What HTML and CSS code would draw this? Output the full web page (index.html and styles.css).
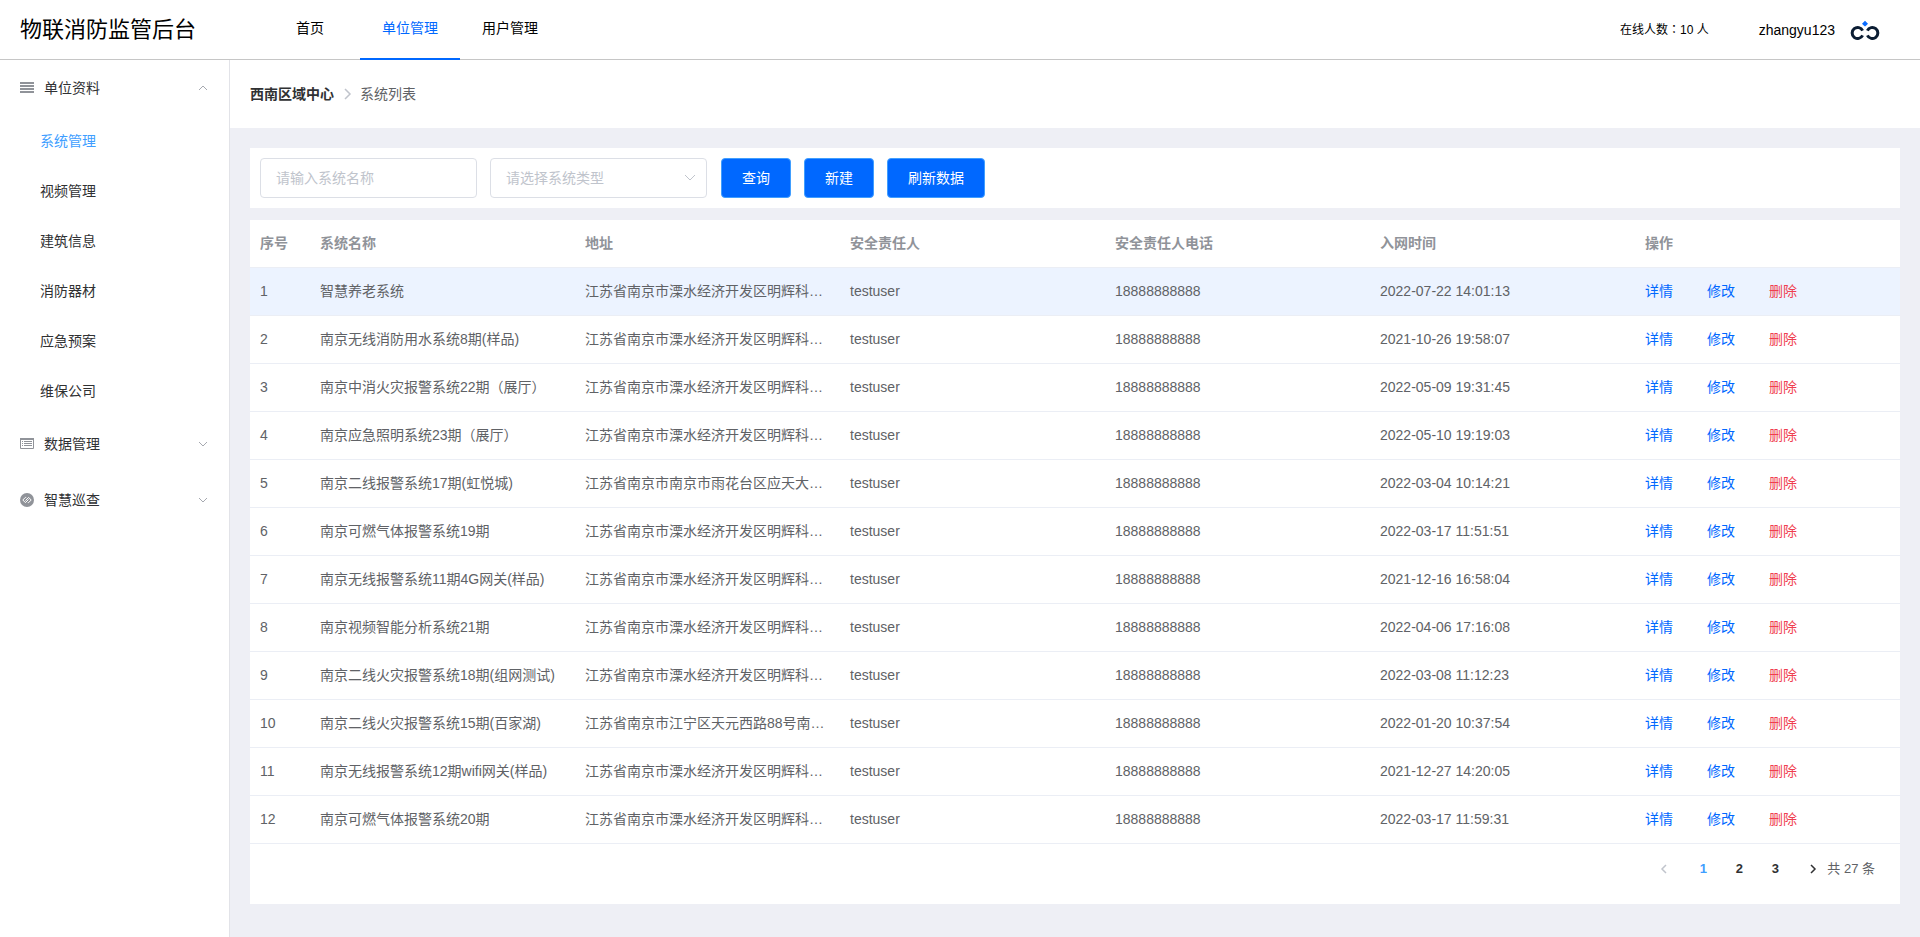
FILE: index.html
```html
<!DOCTYPE html>
<html lang="zh-CN">
<head>
<meta charset="utf-8">
<title>物联消防监管后台</title>
<link rel="stylesheet" href="styles.css">
</head>
<body>
<header class="header">
  <h1 class="brand">物联消防监管后台</h1>
  <nav class="topnav">
    <a class="topnav-item" href="#">首页</a>
    <a class="topnav-item is-active" href="#">单位管理</a>
    <a class="topnav-item" href="#">用户管理</a>
  </nav>
  <div class="user">
    <span class="online">在线人数<span class="punct" lang="zh-TW">：</span>10 人</span>
    <span class="username">zhangyu123</span>
    <svg class="logo" viewBox="0 0 30 20" width="30" height="20" aria-hidden="true">
      <path d="M12.600 10.600A5.500 5.500 0 1 0 12.600 15.400M17.400 10.600A5.500 5.500 0 1 1 17.400 15.400" fill="none" stroke="#0b1d33" stroke-width="3"/>
      <path d="M15 .8L16.500 2.300L18 3.700L16.500 5.200L15 6.600L13.500 5.200L12 3.700L13.500 2.300Z" fill="#0a6cff"/>
    </svg>
  </div>
</header>
<div class="body">
  <aside class="sidebar">
    <button class="group" type="button">
      <svg class="group-icon" viewBox="0 0 14 14" width="14" height="14"><path d="M0 1h14v2H0zM0 4h14v2H0zM0 7h14v2H0zM0 10h14v2H0z" fill="#909399"/></svg>
      <span class="group-name">单位资料</span>
      <svg class="chevron" viewBox="0 0 12 12" width="12" height="12"><path d="M2 8L6 4L10 8"/></svg>
    </button>
    <nav class="subnav">
      <a class="subnav-item is-active" href="#">系统管理</a>
      <a class="subnav-item" href="#">视频管理</a>
      <a class="subnav-item" href="#">建筑信息</a>
      <a class="subnav-item" href="#">消防器材</a>
      <a class="subnav-item" href="#">应急预案</a>
      <a class="subnav-item" href="#">维保公司</a>
    </nav>
    <button class="group" type="button">
      <svg class="group-icon" viewBox="0 0 14 14" width="14" height="14"><path d="M.5 1.500h13v10H.5z" fill="none" stroke="#909399"/><path d="M0 1h14v2H0zM2 4h1v1H2zM4 4h8v1H4zM2 6h1v1H2zM4 6h8v1H4zM2 8h1v1H2zM4 8h8v1H4z" fill="#909399"/></svg>
      <span class="group-name">数据管理</span>
      <svg class="chevron" viewBox="0 0 12 12" width="12" height="12"><path d="M2 4L6 8L10 4"/></svg>
    </button>
    <button class="group" type="button">
      <svg class="group-icon" viewBox="0 0 14 14" width="14" height="14"><circle cx="7" cy="7" r="7" fill="#909399"/><path d="M6.200 4.400L5.400 4.400L2.800 7L5.400 9.600L8.600 6.400M7.800 9.600L8.600 9.600L11.200 7L8.600 4.400L5.400 7.600" fill="none" stroke="#fff"/></svg>
      <span class="group-name">智慧巡查</span>
      <svg class="chevron" viewBox="0 0 12 12" width="12" height="12"><path d="M2 4L6 8L10 4"/></svg>
    </button>
  </aside>
  <main class="main">
    <nav class="breadcrumb">
      <a class="crumb-root" href="#">西南区域中心</a>
      <svg class="crumb-sep" viewBox="0 0 8 12" width="8" height="12"><path d="M1 1L6 6L1 11"/></svg>
      <span>系统列表</span>
    </nav>
    <div class="content">
      <form class="toolbar">
        <input class="field" type="text" placeholder="请输入系统名称" aria-label="系统名称">
        <div class="select">
          <select class="field" aria-label="系统类型"><option>请选择系统类型</option></select>
          <svg class="chevron" viewBox="0 0 12 12" width="12" height="12"><path d="M1 3L6 8L11 3"/></svg>
        </div>
        <div class="buttons">
          <button class="btn" type="button">查询</button>
          <button class="btn" type="button">新建</button>
          <button class="btn" type="button">刷新数据</button>
        </div>
      </form>
      <section class="card">
        <table class="table">
          <thead>
            <tr><th class="col-index">序号</th><th>系统名称</th><th>地址</th><th>安全责任人</th><th>安全责任人电话</th><th>入网时间</th><th>操作</th></tr>
          </thead>
          <tbody id="rows"></tbody>
        </table>
        <nav class="pagination" aria-label="分页">
          <button class="page-arrow" type="button" disabled aria-label="上一页"><svg viewBox="0 0 8 12" width="8" height="12"><path d="M6 2L2 6L6 10"/></svg></button>
          <button class="page is-active" type="button">1</button>
          <button class="page" type="button">2</button>
          <button class="page" type="button">3</button>
          <button class="page-arrow is-next" type="button" aria-label="下一页"><svg viewBox="0 0 8 12" width="8" height="12"><path d="M2 2L6 6L2 10"/></svg></button>
          <span class="total">共 27 条</span>
        </nav>
      </section>
    </div>
  </main>
</div>
<script src="app.js"></script>
</body>
</html>
```
FILE: styles.css
```css
* { box-sizing: border-box; }
body {
  margin: 0;
  min-height: 100vh;
  display: flex;
  flex-direction: column;
  background: #eeeff5;
  color: #606266;
  font: 14px/20px "Liberation Sans", "Noto Sans CJK SC", sans-serif;
}
a { color: inherit; text-decoration: none; }
button, input, select { font: inherit; }
button { border: 0; background: none; cursor: pointer; }
/* Full-width punctuation centred in its box */
.punct { font-family: "Noto Sans CJK TC", sans-serif; line-height: 1; }

.header {
  display: flex;
  height: 60px;
  background: #fff;
  border-bottom: 1px solid #c6c6c6;
  color: #000;
}
.brand {
  width: 240px;
  margin: 0 0 0 20px;
  font-size: 22px;
  font-weight: 400;
  line-height: 60px;
}
.topnav { display: flex; height: 60px; }
.topnav-item { width: 100px; line-height: 56px; text-align: center; }
.topnav-item.is-active { color: #0068ff; border-bottom: 2px solid #0068ff; }
.user {
  display: flex;
  align-items: center;
  margin-left: auto;
  padding-right: 40px;
}
.online { margin-right: 50px; font-size: 12px; }
.username { margin-right: 15px; }

.body { flex: 1; display: flex; }
.sidebar {
  flex: none;
  width: 230px;
  background: #fff;
  border-right: 1px solid #e2e3e8;
  color: #303133;
}
.group {
  display: flex;
  align-items: center;
  width: 100%;
  height: 56px;
  padding: 0 20px;
  color: inherit;
}
.group-name { margin-left: 10px; }
.group .chevron { margin-left: auto; }
.chevron path { fill: none; stroke: #a6a9b0; }
.subnav-item { display: block; padding-left: 40px; line-height: 50px; }
.subnav-item.is-active { color: #409eff; }

.main { flex: 1; min-width: 0; }
.breadcrumb {
  display: flex;
  align-items: center;
  height: 68px;
  padding: 0 20px;
  background: #fff;
}
.crumb-root { color: #303133; font-weight: 700; }
.crumb-sep { margin: 0 8px 0 10px; }
.crumb-sep path { fill: none; stroke: #c0c4cc; stroke-width: 1.5; }
.content { padding: 20px; }
.toolbar {
  display: flex;
  gap: 13px;
  padding: 10px;
  margin-bottom: 12px;
  background: #fff;
}
.field {
  width: 217px;
  height: 40px;
  padding: 0 15px;
  border: 1px solid #dcdfe6;
  border-radius: 4px;
  background: #fff;
  color: #c0c4cc;
  appearance: none;
}
.field::placeholder { color: #c0c4cc; }
.select { display: grid; align-items: center; }
.select > * { grid-area: 1 / 1; }
.select .chevron { justify-self: end; margin-right: 11px; pointer-events: none; }
.select .chevron path { stroke: #c0c4cc; }
.buttons { display: flex; gap: 13px; margin-left: 1px; }
.btn {
  height: 40px;
  padding: 0 20px;
  border: 1px solid #409eff;
  border-radius: 4px;
  background: #0068ff;
  color: #fff;
}

.card { background: #fff; }
.table { width: 100%; table-layout: fixed; border-collapse: separate; border-spacing: 0; }
.table th, .table td {
  height: 48px;
  padding: 0 10px 2px;
  border-bottom: 1px solid #ebeef5;
  text-align: left;
  white-space: nowrap;
  overflow: hidden;
  text-overflow: ellipsis;
}
.table th { color: #909399; font-weight: 700; }
.table .col-index { width: 60px; }
.table .is-current td { background: #ecf3ff; }
.actions { display: flex; gap: 34px; color: #0068ff; }
.actions .danger { color: #f03e50; }

.pagination {
  display: flex;
  align-items: center;
  justify-content: flex-end;
  height: 60px;
  padding: 0 25px 10px 0;
  font-size: 13px;
}
.page { width: 36px; padding: 0; color: #303133; font-weight: 700; }
.page.is-active { color: #409eff; }
.page-arrow { display: flex; padding: 0 17px 0 0; }
.page-arrow.is-next { padding: 0 10px 0 16px; }
.page-arrow path { fill: none; stroke: #303133; stroke-width: 1.5; }
.page-arrow:disabled path { stroke: #c0c4cc; }
```
FILE: app.js
```js
const address = "江苏省南京市溧水经济开发区明辉科技园";
const systems = [
  ["智慧养老系统", address, "2022-07-22 14:01:13"],
  ["南京无线消防用水系统8期(样品)", address, "2021-10-26 19:58:07"],
  ["南京中消火灾报警系统22期（展厅）", address, "2022-05-09 19:31:45"],
  ["南京应急照明系统23期（展厅）", address, "2022-05-10 19:19:03"],
  ["南京二线报警系统17期(虹悦城)", "江苏省南京市南京市雨花台区应天大街口", "2022-03-04 10:14:21"],
  ["南京可燃气体报警系统19期", address, "2022-03-17 11:51:51"],
  ["南京无线报警系统11期4G网关(样品)", address, "2021-12-16 16:58:04"],
  ["南京视频智能分析系统21期", address, "2022-04-06 17:16:08"],
  ["南京二线火灾报警系统18期(组网测试)", address, "2022-03-08 11:12:23"],
  ["南京二线火灾报警系统15期(百家湖)", "江苏省南京市江宁区天元西路88号南京市", "2022-01-20 10:37:54"],
  ["南京无线报警系统12期wifi网关(样品)", address, "2021-12-27 14:20:05"],
  ["南京可燃气体报警系统20期", address, "2022-03-17 11:59:31"]
];
const centrePunctuation = (text) => text.replace(/[（）]/g, '<span class="punct" lang="zh-TW">$&</span>');
document.getElementById("rows").innerHTML = systems.map(([name, place, time], i) => `
  <tr class="${i === 0 ? "is-current" : ""}">
    <td>${i + 1}</td><td>${centrePunctuation(name)}</td><td>${place}</td><td>testuser</td><td>18888888888</td><td>${time}</td>
    <td><div class="actions"><a href="#">详情</a><a href="#">修改</a><a class="danger" href="#">删除</a></div></td>
  </tr>`).join("");
```
